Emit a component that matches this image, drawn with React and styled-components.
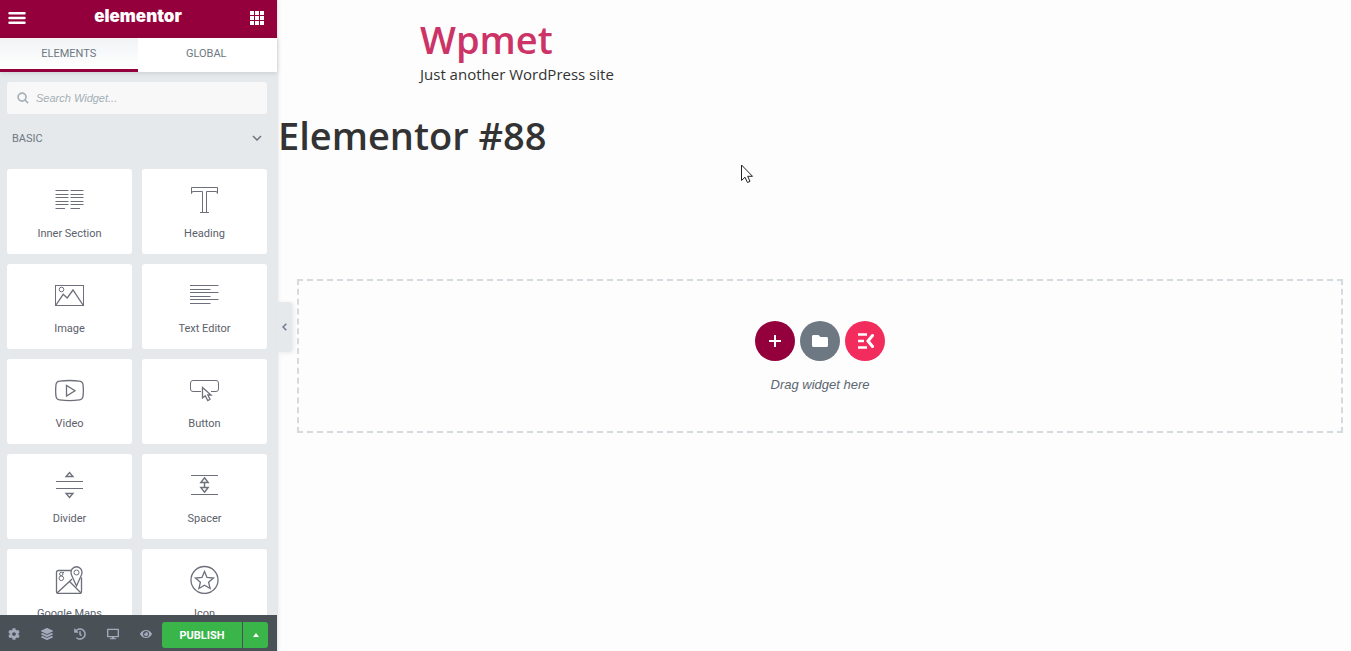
import React, { useState } from "react"
import styled, { createGlobalStyle, css } from "styled-components"
import { FaCog, FaLayerGroup, FaHistory, FaDesktop, FaEye, FaFolder } from "react-icons/fa"


const GlobalStyle = createGlobalStyle`
    * {
        box-sizing: border-box;
    }
    body {
        margin: 0;
        background: #fdfdfd;
        font-family: Roboto, Arial, sans-serif;
    }
    button {
        margin: 0;
        padding: 0;
        border: 0;
        background: none;
        color: inherit;
        font: inherit;
        cursor: pointer;
    }
`

const Editor = styled.div`
    display: flex;
    height: 100vh;
    overflow: hidden;
`

const Panel = styled.aside`
    position: relative;
    z-index: 1;
    display: flex;
    flex-direction: column;
    flex: none;
    width: 277px;
    background: #e6e9ec;
    box-shadow: 1px 0 0 #e6e9ec, 0 0 5px rgba(0, 0, 0, 0.15);
`

const PanelHeader = styled.header`
    display: flex;
    align-items: center;
    justify-content: space-between;
    flex: none;
    height: 38px;
    padding: 0 13px 2px 8px;
    background: #93003c;
    color: #fff;

    button {
        display: flex;
    }
`

const Logo = styled.div`
    padding-bottom: 4px;
    font-family: Inter, sans-serif;
    font-size: 17px;
    line-height: 20px;
    font-weight: 900;
`

const Tabs = styled.nav`
    position: relative;
    display: flex;
    flex: none;
    height: 34px;
    padding-right: 2px;
    background: #fff;
    box-shadow: 0 1px 5px rgba(0, 0, 0, 0.12);
`

const Tab = styled.button`
    flex: 1;
    border-bottom: 3px solid transparent;
    color: #6d7882;
    font-size: 11px;
    text-transform: uppercase;

    ${({ $active }) => $active && css`
        border-bottom-color: #93003c;
        background: linear-gradient(#f1f3f5, #fff);
    `}
`

const PanelBody = styled.div`
    flex: 1;
    min-height: 0;
    padding: 10px 10px 0 7px;
    overflow: hidden;
`

const Search = styled.label`
    display: flex;
    align-items: center;
    gap: 7px;
    height: 32px;
    padding: 0 10px;
    border-radius: 3px;
    background: #f8f8f8;
    color: #a4afb7;

    input {
        flex: 1;
        min-width: 0;
        padding: 0;
        border: 0;
        outline: 0;
        background: none;
        color: #6d7882;
        font: italic 11px "Liberation Sans", Arial, sans-serif;
    }
    input::placeholder {
        color: #a4afb7;
    }
`

const CategoryTitle = styled.button`
    display: flex;
    align-items: center;
    justify-content: space-between;
    width: 100%;
    height: 48px;
    margin-bottom: 7px;
    padding: 0 5px;
    color: #6d7882;
    font-size: 11px;
    text-transform: uppercase;
`

const WidgetGrid = styled.div`
    display: grid;
    grid-template-columns: 1fr 1fr;
    gap: 10px;
`

const WidgetCard = styled.button`
    display: flex;
    flex-direction: column;
    align-items: center;
    gap: 13px;
    height: 85px;
    padding-top: 16px;
    border-radius: 3px;
    background: #fff;
    color: #5b616b;
    font-size: 11px;
    line-height: 14px;
`

const WidgetIcon = styled.svg`
    flex: none;
    width: 29px;
    height: 29px;
    fill: none;
    stroke: #6d6f7a;
    stroke-width: 1;
`

const PanelFooter = styled.footer`
    position: relative;
    display: flex;
    align-items: center;
    flex: none;
    gap: 6px;
    height: 36px;
    padding: 4px 9px 0 0;
    background: #495157;
`

const Tool = styled.button`
    display: flex;
    align-items: center;
    justify-content: center;
    width: 27px;
    height: 26px;
    padding-bottom: 2px;
    color: #a4aabb;
    font-size: 12px;
`

const PublishGroup = styled.div`
    display: flex;
    flex: 1;
    gap: 1px;
    height: 26px;
    margin-left: -3px;
    color: #fff;
`

const Publish = styled.button`
    flex: 1;
    border-radius: 3px 0 0 3px;
    background: #39b54a;
    font-size: 11px;
    font-weight: 700;
    text-transform: uppercase;
`

const PublishMenu = styled.button`
    display: flex;
    align-items: center;
    justify-content: center;
    width: 25px;
    border-radius: 0 3px 3px 0;
    background: #39b54a;
`

const Collapse = styled.button`
    position: absolute;
    top: 302px;
    left: 100%;
    display: flex;
    align-items: center;
    justify-content: center;
    width: 15px;
    height: 50px;
    border-radius: 0 3px 3px 0;
    background: #e6e9ec;
    box-shadow: 2px 1px 4px rgba(0, 0, 0, 0.08);
    color: #6d7896;
`

const Preview = styled.main`
    position: relative;
    flex: 1;
    min-width: 0;
    padding-left: 1px;
    color: #333;
    font-family: "Segoe UI", "Open Sans", sans-serif;
`

const Inset = styled.div`
    padding: 0 8px 0 19px;
`

const SiteHeader = styled.header`
    max-width: 800px;
    margin: 0 auto;
    padding-top: 16px;
`

const SiteTitle = styled.h1`
    margin: 0;
    font-size: 38px;
    line-height: 47px;
    font-weight: 600;

    a {
        color: #cc3366;
        text-decoration: none;
    }
`

const Tagline = styled.p`
    margin: 0;
    font-size: 15px;
    line-height: 22px;
`

const PageTitle = styled.h2`
    margin: 26px 0 120px;
    font-size: 38px;
    line-height: 48px;
    font-weight: 600;
`

const DropZone = styled.section`
    display: flex;
    flex-direction: column;
    align-items: center;
    gap: 15px;
    padding: 40px 0 38px;
    border: 2px dashed #d5dadf;
    color: #5c6670;
    font: italic 13px/17px "Liberation Sans", Arial, sans-serif;

    p {
        margin: 0;
    }
`

const AddButtons = styled.div`
    display: flex;
    gap: 5px;
`

const RoundButton = styled.button`
    display: flex;
    align-items: center;
    justify-content: center;
    width: 40px;
    height: 40px;
    border-radius: 50%;
    background: ${({ $color }) => $color};
    color: #fff;
`

const Cursor = styled.svg`
    position: absolute;
    top: 164px;
    left: 464px;
`

const WIDGETS = [
    {
        title: "Inner Section",
        icon: <path d="M0.5 5.5H13.5M0.5 9.5H13.5M0.5 12.5H13.5M0.5 16.5H13.5M0.5 19.5H13.5M0.5 23.5H10M15.5 5.5H28.5M15.5 9.5H28.5M15.5 12.5H28.5M15.5 16.5H28.5M15.5 19.5H28.5M15.5 23.5H25" />
    },
    {
        title: "Heading",
        icon: <path d="M1.5 2.5H27.5V8.5L26.5 6.5H16.5V27.5H19H10H12.5V6.5H2.5L1.5 8.5Z" />
    },
    {
        title: "Image",
        icon: <>
            <rect x="0.5" y="5.5" width="28" height="20" />
            <circle cx="6.5" cy="9.5" r="2.3" />
            <path d="M1 25L8.2 14.3L12.2 18L18 10L28 25" strokeWidth="1.3" />
        </>
    },
    {
        title: "Text Editor",
        icon: <path d="M0 5.5H28.5M0 9.5H20.5M0 12.5H28.5M0 16.5H20.5M0 19.5H28.5M0 23.5H20.5" />
    },
    {
        title: "Video",
        icon: <>
            <path d="M4.5 6.2Q14.5 4.8 24.5 6.2Q27.5 6.5 28 9.5Q28.7 15.5 28 21.5Q27.5 24.5 24.5 24.9Q14.5 26.2 4.5 24.9Q1.5 24.5 1 21.5Q0.3 15.5 1 9.5Q1.5 6.5 4.5 6.2Z" strokeWidth="1.3" />
            <path d="M11.5 10.5V21L20 15.7Z" strokeWidth="1.3" />
        </>
    },
    {
        title: "Button",
        icon: <>
            <path d="M11 16.5H3Q0.5 16.5 0.5 14V8Q0.5 5.5 3 5.5H26Q28.5 5.5 28.5 8V14Q28.5 16.5 26 16.5H21" />
            <path d="M12.5 12.5V23L15.2 20.8L17.8 25.5L20 24.3L17.8 20H21Z" strokeWidth="1.3" />
        </>
    },
    {
        title: "Divider",
        icon: <>
            <path d="M1 11.5H28M1 18.5H28" />
            <path d="M14.5 2.5L18 6.5H11ZM14.5 27.5L18 23.5H11Z" strokeWidth="1.3" />
        </>
    },
    {
        title: "Spacer",
        icon: <>
            <path d="M1 5.5H28M1 24.5H28" />
            <path d="M14.5 7.8L18.2 12.5H10.8ZM14.5 22.2L18.2 17.5H10.8ZM14.5 12.5V17.5" strokeWidth="1.4" />
        </>
    },
    {
        title: "Google Maps",
        icon: <>
            <path d="M16 5.5H3.5Q1.5 5.5 1.5 7.5V26.5Q1.5 28.5 3.5 28.5H24.5Q26.5 28.5 26.5 26.5V12.5" strokeWidth="1.3" />
            <path d="M2 28L14.5 16.5L26 28M17 14L14.5 16.5" strokeWidth="1.3" />
            <path d="M21.5 21L17 11Q14.8 6.5 17.5 3.5Q21.5 0 25.5 3.5Q28.2 6.5 26 11Z" strokeWidth="1.3" />
            <circle cx="21.5" cy="7.5" r="2.5" />
            <circle cx="6.3" cy="9" r="1.7" />
            <circle cx="6.3" cy="13.3" r="2.3" />
            <path d="M7.5 7.5H9" />
        </>
    },
    {
        title: "Icon",
        icon: <>
            <circle cx="14.5" cy="15" r="13.5" strokeWidth="1.3" />
            <path d="M14.5 6.5L17 12.4L23.5 13L18.6 17.2L20.1 23.5L14.5 20.2L8.9 23.5L10.4 17.2L5.5 13L12 12.4Z" strokeWidth="1.3" />
        </>
    }
]

const TOOLS = [
    { label: "Settings", Icon: FaCog },
    { label: "Navigator", Icon: FaLayerGroup },
    { label: "History", Icon: FaHistory },
    { label: "Responsive Mode", Icon: FaDesktop },
    { label: "Preview Changes", Icon: FaEye }
]

const MenuIcon = () => (
    <svg width="18" height="12" viewBox="0 0 18 12" fill="none" stroke="currentColor" strokeWidth="2.5" strokeLinecap="round">
        <path d="M1.5 1.2H16.5M1.5 6H16.5M1.5 10.8H16.5" />
    </svg>
)

const AppsIcon = () => (
    <svg width="14" height="14" viewBox="0 0 14 14" fill="currentColor">
        {
            [0, 5, 10].map(y => [0, 5, 10].map(x => <rect key={`${x}-${y}`} x={x} y={y} width="4" height="4" />))
        }
    </svg>
)

const ElementsKitIcon = () => (
    <svg width="18" height="16" viewBox="0 0 18 16" fill="none" stroke="currentColor" strokeWidth="2.5">
        <path d="M2 1.5H11M2 8H8M2 14.5H11" />
        <path d="M16.5 2.5L12 8L16.5 13.5" strokeWidth="3" strokeLinecap="round" />
    </svg>
)

const Sidebar = () => {
    const [tab, setTab] = useState("Elements")
    const [open, setOpen] = useState(true)

    return (
        <Panel>
            <PanelHeader>
                <button aria-label="Menu"><MenuIcon /></button>
                <Logo>elementor</Logo>
                <button aria-label="Widgets Panel"><AppsIcon /></button>
            </PanelHeader>
            <Tabs>
                {
                    ["Elements", "Global"].map(name => (
                        <Tab key={name} $active={tab === name} onClick={() => setTab(name)}>{name}</Tab>
                    ))
                }
            </Tabs>
            <PanelBody>
                <Search>
                    <svg width="12" height="12" viewBox="0 0 13 13" fill="none" stroke="currentColor" strokeWidth="1.8">
                        <circle cx="5.5" cy="5.5" r="4.3" />
                        <path d="M8.700 8.700L12 12" />
                    </svg>
                    <input type="text" placeholder="Search Widget..." aria-label="Search Widget" />
                </Search>
                <CategoryTitle aria-expanded={open} onClick={() => setOpen(!open)}>
                    Basic
                    <svg width="10" height="6" viewBox="0 0 10 6" fill="none" stroke="currentColor" strokeWidth="1.5">
                        <path d="M1 1L5 5L9 1" />
                    </svg>
                </CategoryTitle>
                {
                    open && <WidgetGrid>
                        {
                            WIDGETS.map(({ title, icon }) => (
                                <WidgetCard key={title}>
                                    <WidgetIcon viewBox="0 0 29 29">{icon}</WidgetIcon>
                                    {title}
                                </WidgetCard>
                            ))
                        }
                    </WidgetGrid>
                }
            </PanelBody>
            <PanelFooter>
                {
                    TOOLS.map(({ label, Icon }) => (
                        <Tool key={label} aria-label={label}><Icon /></Tool>
                    ))
                }
                <PublishGroup>
                    <Publish>Publish</Publish>
                    <PublishMenu aria-label="Save Options">
                        <svg width="6" height="4" viewBox="0 0 6 4"><path d="M3 0L6 4H0Z" fill="currentColor" /></svg>
                    </PublishMenu>
                </PublishGroup>
            </PanelFooter>
            <Collapse aria-label="Hide Panel">
                <svg width="5" height="8" viewBox="0 0 5 8" fill="none" stroke="currentColor" strokeWidth="1.5">
                    <path d="M4.3 0.8L1 4L4.3 7.2" />
                </svg>
            </Collapse>
        </Panel>
    )
}

export default function App () {
    return (
        <Editor>
            <GlobalStyle />
            <Sidebar />
            <Preview>
                <Inset>
                    <SiteHeader>
                        <SiteTitle><a href="#home">Wpmet</a></SiteTitle>
                        <Tagline>Just another WordPress site</Tagline>
                    </SiteHeader>
                </Inset>
                <PageTitle>Elementor #88</PageTitle>
                <Inset>
                    <DropZone>
                        <AddButtons>
                            <RoundButton $color="#93003c" aria-label="Add New Section">
                                <svg width="12" height="12" viewBox="0 0 12 12" stroke="currentColor" strokeWidth="2">
                                    <path d="M6 0V12M0 6H12" />
                                </svg>
                            </RoundButton>
                            <RoundButton $color="#6d7882" aria-label="Add Template"><FaFolder size={16} /></RoundButton>
                            <RoundButton $color="#f22c5c" aria-label="ElementsKit"><ElementsKitIcon /></RoundButton>
                        </AddButtons>
                        <p>Drag widget here</p>
                    </DropZone>
                </Inset>
                <Cursor width="13" height="20" viewBox="0 0 13 20" fill="#fff" stroke="#222" strokeWidth="1">
                    <path d="M0.5 1V16.5L4 13.2L6.5 18.5L9 17.4L6.7 12.3H11.5Z" />
                </Cursor>
            </Preview>
        </Editor>
    )
}
